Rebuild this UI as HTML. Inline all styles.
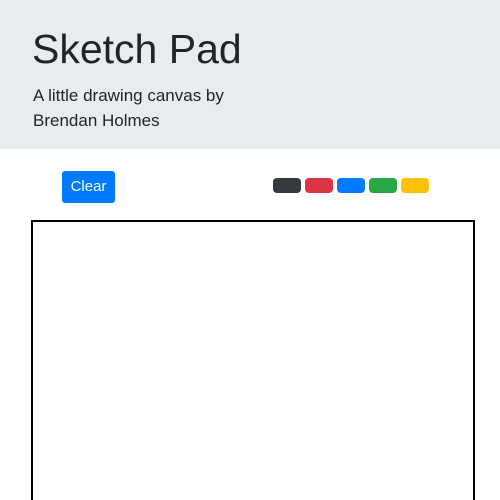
<!DOCTYPE html>
<html><head><style>
html,body{margin:0;padding:0;background:#fff;font-family:"Liberation Sans",sans-serif;}
.wrap{position:relative;width:500px;height:500px;overflow:hidden;}
.hdr{position:absolute;left:0;top:0;width:500px;height:149px;background:#e9ecef;}
h1{position:absolute;left:32px;top:23px;margin:0;font-size:41px;font-weight:400;color:#212529;line-height:52px;}
p{position:absolute;left:33px;top:83px;margin:0;font-size:17px;line-height:25px;color:#212529;width:230px;}
.btn{position:absolute;left:62px;top:171px;width:53px;height:32px;background:#007bff;border-radius:3px;color:#fff;font-size:15px;line-height:32px;text-align:center;}
.sw{position:absolute;top:178px;width:28px;height:15px;border-radius:4px;}
.cv{position:absolute;left:31px;top:220px;width:440px;height:300px;border:2px solid #000;}
</style></head><body><div class="wrap">
<div class="hdr"><h1>Sketch Pad</h1><p>A little drawing canvas by Brendan Holmes</p></div>
<div class="btn">Clear</div>
<div class="sw" style="left:273px;background:#343a40"></div>
<div class="sw" style="left:305px;background:#dc3545"></div>
<div class="sw" style="left:337px;background:#007bff"></div>
<div class="sw" style="left:369px;background:#28a745"></div>
<div class="sw" style="left:401px;background:#ffc107"></div>
<div class="cv"></div>
</div></body></html>
